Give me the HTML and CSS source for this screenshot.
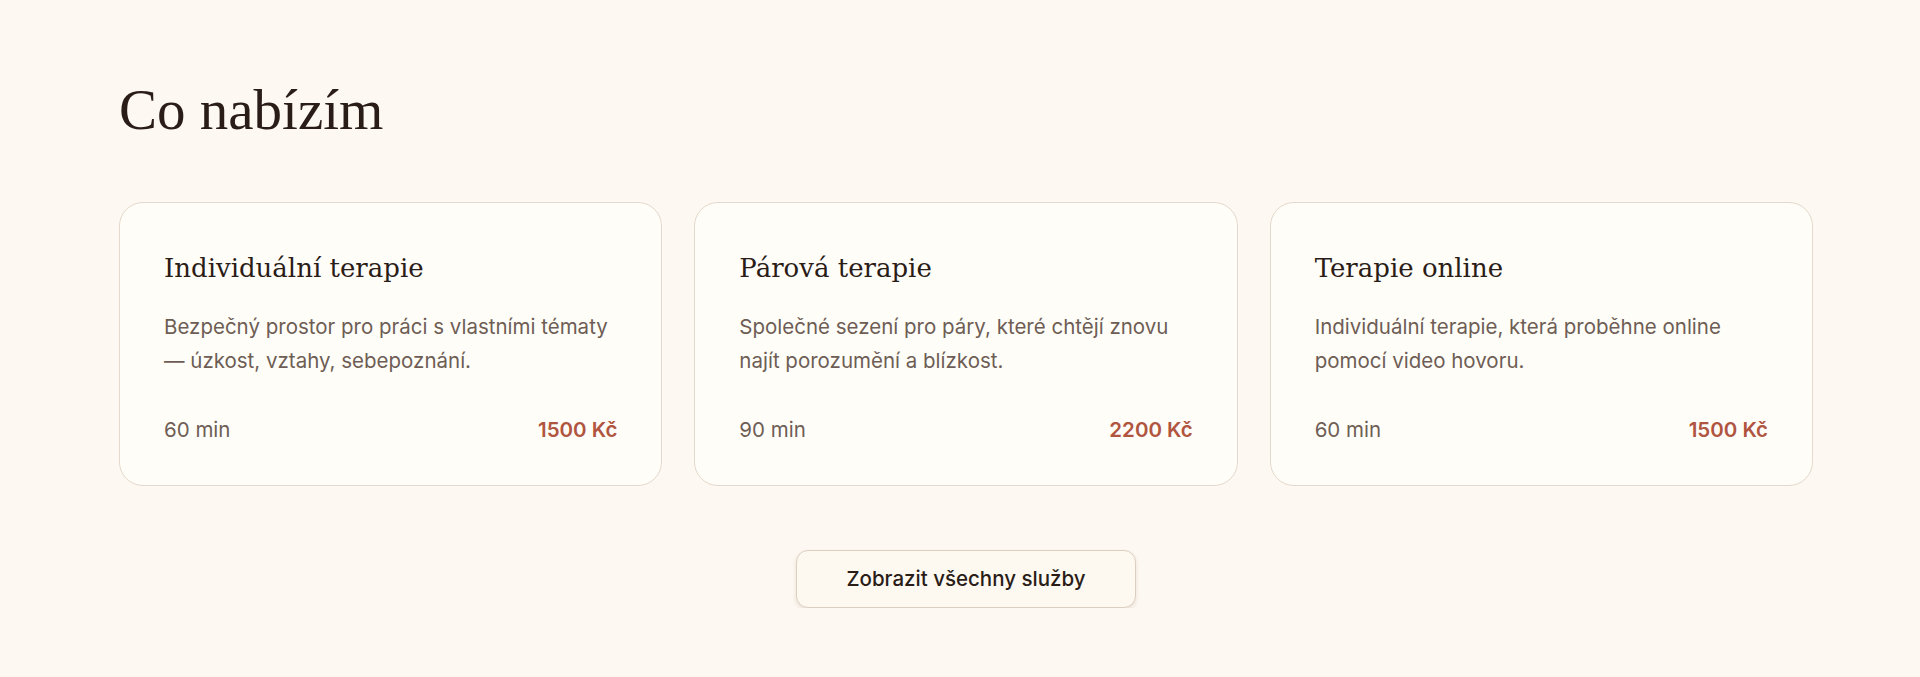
FILE: index.html
```html
<!DOCTYPE html>
<html lang="cs">
<head>
    <meta charset="UTF-8">
    <meta name="viewport" content="width=device-width, initial-scale=1.0">
    <title>Co nabízím</title>
    <link rel="stylesheet" href="styles.css">
</head>
<body>
    <section class="services">
        <h2 class="services-title">Co nabízím</h2>
        <div class="services-grid">
            <div class="service-card">
                <h3 class="service-name">Individuální terapie</h3>
                <p class="service-desc">Bezpečný prostor pro práci s vlastními tématy — úzkost, vztahy, sebepoznání.</p>
                <div class="service-meta">
                    <span class="service-time">60 min</span>
                    <span class="service-price">1500 Kč</span>
                </div>
            </div>
            <div class="service-card">
                <h3 class="service-name">Párová terapie</h3>
                <p class="service-desc">Společné sezení pro páry, které chtějí znovu najít porozumění a blízkost.</p>
                <div class="service-meta">
                    <span class="service-time">90 min</span>
                    <span class="service-price">2200 Kč</span>
                </div>
            </div>
            <div class="service-card">
                <h3 class="service-name">Terapie online</h3>
                <p class="service-desc">Individuální terapie, která proběhne online pomocí video hovoru.</p>
                <div class="service-meta">
                    <span class="service-time">60 min</span>
                    <span class="service-price">1500 Kč</span>
                </div>
            </div>
        </div>
        <div class="services-more">
            <a class="btn-outline" href="#">Zobrazit všechny služby</a>
        </div>
    </section>
</body>
</html>
```

FILE: styles.css
```css
body{
    margin: 0;
    background-color: #fdf8f1;
    font-family: Inter, "Noto Sans", sans-serif;
    color: #2a1c17;
}
.services{
    width: 1694px;
    margin-left: 119px;
    padding-top: 76px;
}
.services-title{
    margin: 0 0 58px 0;
    font-family: "Liberation Serif", serif;
    font-size: 57px;
    font-weight: 400;
    line-height: 1.2;
    color: #2a1c17;
}
.services-grid{
    display: grid;
    grid-template-columns: repeat(3, 1fr);
    gap: 32px;
}
.service-card{
    display: flex;
    flex-direction: column;
    padding: 47px 44px 43px 44px;
    background-color: #fffdf8;
    border: 1px solid #e4d9cc;
    border-radius: 24px;
}
.service-name{
    margin: 0 0 24px 0;
    font-family: "DejaVu Serif", serif;
    font-size: 26px;
    font-weight: 400;
    line-height: 36px;
    color: #2a1c17;
}
.service-desc{
    margin: 0 0 40px 0;
    font-size: 20.5px;
    line-height: 34px;
    color: #6e5d55;
}
.service-meta{
    display: flex;
    justify-content: space-between;
    align-items: center;
    font-size: 20.5px;
    line-height: 24px;
}
.service-time{
    color: #6e5d55;
}
.service-price{
    color: #b0553f;
    font-weight: 600;
}
.services-more{
    display: flex;
    justify-content: center;
    margin-top: 64px;
}
.btn-outline{
    display: inline-block;
    padding: 16px 49px;
    font-size: 20.5px;
    font-weight: 500;
    line-height: 24px;
    color: #2a1c17;
    text-decoration: none;
    background-color: #fdf9f1;
    border: 1px solid #dccfc1;
    border-radius: 12px;
    box-shadow: 0 2px 4px rgba(90, 60, 40, .12);
}
```
